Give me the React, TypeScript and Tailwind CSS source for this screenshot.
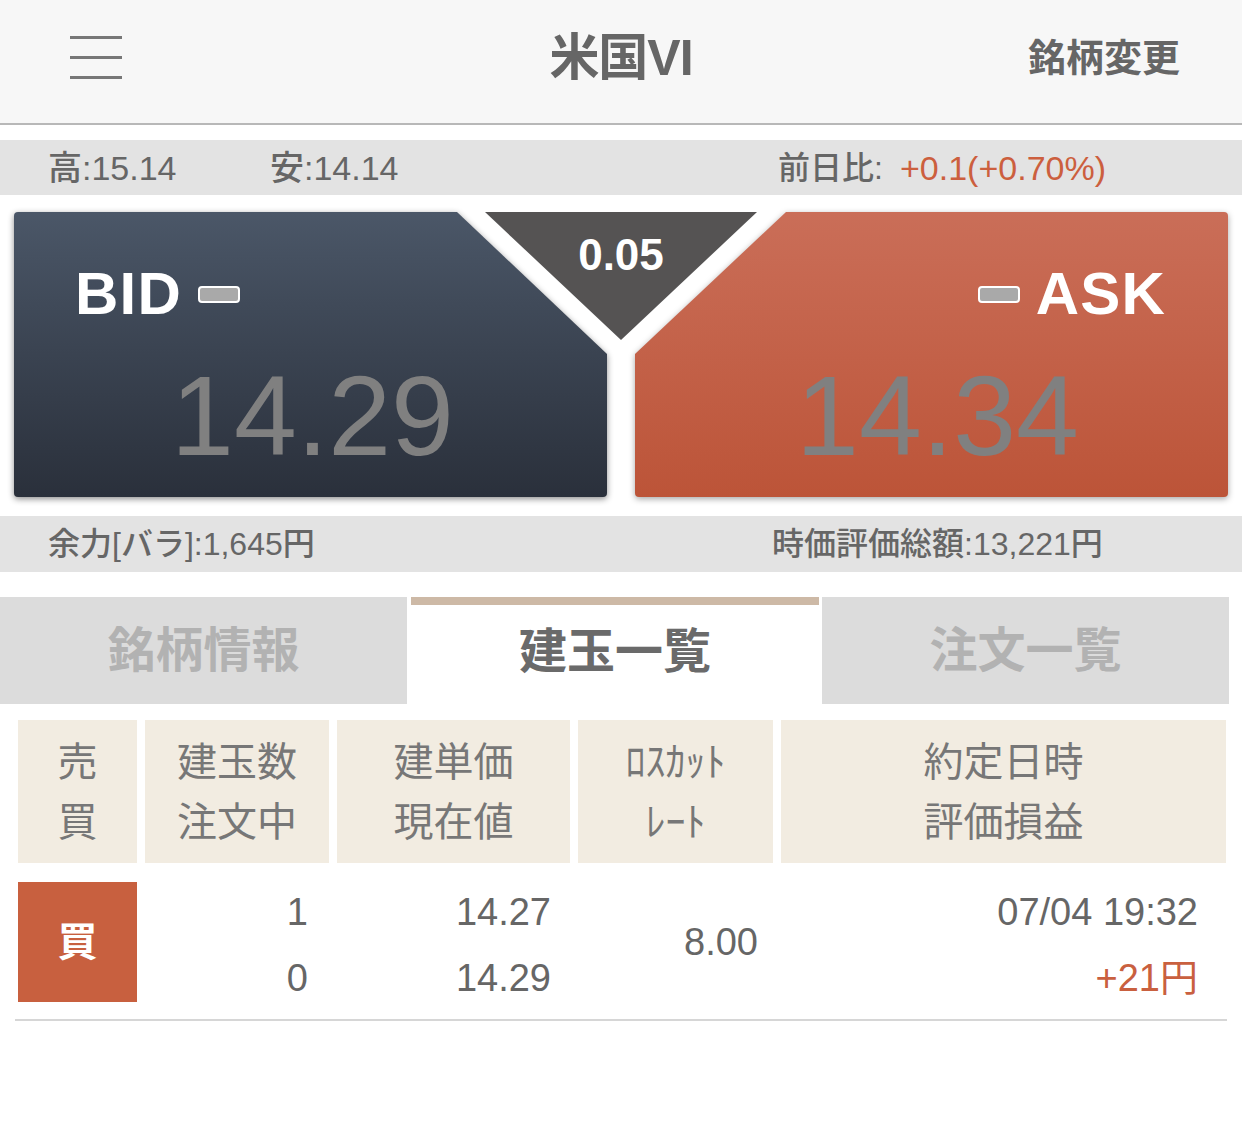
import React from 'react';

const Pill = () => (
    <span className="inline-block w-[42px] h-[17px] rounded-[4px] bg-[#a9a9a9] border-2 border-white" />
);

export default function App() {
    return (
        <div className="w-[1242px] min-h-[1143px] bg-white text-[#666] [font-family:'Liberation_Sans','Noto_Sans_CJK_JP',sans-serif]">
            {/* header */}
            <div className="h-[125px] bg-[#f7f7f7] border-b-2 border-[#b8b8b8] flex items-center pb-[8px]">
                <div className="w-[300px] pl-[70px]">
                    <div className="w-[52px] flex flex-col gap-[17px]">
                        <span className="h-[3px] bg-[#777]" />
                        <span className="h-[3px] bg-[#777]" />
                        <span className="h-[3px] bg-[#777]" />
                    </div>
                </div>
                <div className="flex-1 text-center text-[50px] font-bold leading-none tracking-[-0.02em]">米国VI</div>
                <div className="w-[300px] pr-[62px] text-right text-[38px] font-bold leading-none">銘柄変更</div>
            </div>

            {/* high / low */}
            <div className="mt-[15px] h-[55px] bg-[#e3e3e3] flex items-center pl-[48px] text-[34px] font-medium leading-none">
                <span className="w-[222px]">高:15.14</span>
                <span className="w-[508px]">安:14.14</span>
                <span className="w-[122px] text-[32px]">前日比:</span>
                <span className="text-[#cc5f3e]">+0.1(+0.70%)</span>
            </div>

            {/* bid / ask */}
            <div className="relative mt-[17px] h-[286px] flex gap-[28px] px-[14px]">
                <div className="w-[593px] h-[285px] drop-shadow-[0_2px_3px_rgba(0,0,0,0.45)]">
                    <div className="h-full bg-gradient-to-b from-[#4b5768] to-[#2a303b] [clip-path:polygon(0_0,443px_0,593px_142px,593px_285px,0_285px)] rounded-[4px] pt-[51px]">
                        <div className="flex items-center gap-[16px] pl-[61px] h-[62px]">
                            <span className="text-[60px] font-bold text-white leading-none tracking-[0.02em]">BID</span>
                            <Pill />
                        </div>
                        <div className="mt-[35px] text-center text-[113px] leading-none text-[#808080] pl-[4px]">14.29</div>
                    </div>
                </div>
                <div className="w-[593px] h-[285px] drop-shadow-[0_2px_3px_rgba(0,0,0,0.35)]">
                    <div className="h-full bg-gradient-to-b from-[#ca6e58] to-[#bc5438] [clip-path:polygon(151px_0,593px_0,593px_285px,0_285px,0_142px)] rounded-[4px] pt-[51px]">
                        <div className="flex items-center justify-end gap-[16px] pr-[62px] h-[62px]">
                            <Pill />
                            <span className="text-[60px] font-bold text-white leading-none tracking-[0.02em]">ASK</span>
                        </div>
                        <div className="mt-[35px] text-center text-[113px] leading-none text-[#808080] pl-[12px]">14.34</div>
                    </div>
                </div>
                {/* spread triangle */}
                <div className="absolute left-[485px] top-0 w-[272px] h-[128px] bg-[#555353] [clip-path:polygon(0_0,272px_0,136px_128px)] flex justify-center pt-[21px]">
                    <span className="text-[44px] font-bold text-white leading-none">0.05</span>
                </div>
            </div>

            {/* balance */}
            <div className="mt-[18px] h-[56px] bg-[#e3e3e3] flex items-center pl-[48px] text-[32px] font-medium leading-none">
                <span className="w-[724px]">余力[バラ]:1,645円</span>
                <span>時価評価総額:13,221円</span>
            </div>

            {/* tabs */}
            <div className="mt-[25px] h-[107px] flex">
                <div className="w-[407px] bg-[#dcdcdc] flex items-center justify-center text-[48px] font-bold text-[#b2b2b2]">銘柄情報</div>
                <div className="ml-[4px] w-[408px] border-t-[8px] border-[#cdb9a6] bg-white flex items-center justify-center text-[48px] font-bold text-[#6a6a6a] pb-[6px]">建玉一覧</div>
                <div className="ml-[3px] w-[407px] bg-[#dcdcdc] flex items-center justify-center text-[48px] font-bold text-[#b2b2b2]">注文一覧</div>
            </div>

            {/* table header */}
            <div className="mt-[16px] mx-[18px] grid grid-cols-[119px_184px_233px_195px_445px] gap-x-[8px] h-[143px] text-[40px] text-[#777] leading-[60px]">
                <div className="bg-[#f2ece1] flex flex-col items-center justify-center"><span>売</span><span>買</span></div>
                <div className="bg-[#f2ece1] flex flex-col items-center justify-center"><span>建玉数</span><span>注文中</span></div>
                <div className="bg-[#f2ece1] flex flex-col items-center justify-center"><span>建単価</span><span>現在値</span></div>
                <div className="bg-[#f2ece1] flex flex-col items-center justify-center"><span>ﾛｽｶｯﾄ</span><span>ﾚｰﾄ</span></div>
                <div className="bg-[#f2ece1] flex flex-col items-center justify-center"><span>約定日時</span><span>評価損益</span></div>
            </div>

            {/* position row */}
            <div className="mx-[15px] pt-[19px] pb-[17px] border-b-2 border-[#d6d6d6]">
                <div className="mx-[3px] grid grid-cols-[119px_184px_233px_195px_445px] grid-rows-[120px] gap-x-[8px] text-[38px] leading-[66px]">
                    <div className="bg-[#c8603f] flex items-center justify-center text-[40px] font-bold text-white">買</div>
                    <div className="flex flex-col justify-center items-end pr-[21px] pt-[6px]"><span>1</span><span>0</span></div>
                    <div className="flex flex-col justify-center items-end pr-[19px] pt-[6px]"><span>14.27</span><span>14.29</span></div>
                    <div className="flex items-center justify-end pr-[15px]">8.00</div>
                    <div className="flex flex-col justify-center items-end pr-[28px] pt-[6px]"><span>07/04 19:32</span><span className="text-[#c9603f]">+21円</span></div>
                </div>
            </div>
        </div>
    );
}
